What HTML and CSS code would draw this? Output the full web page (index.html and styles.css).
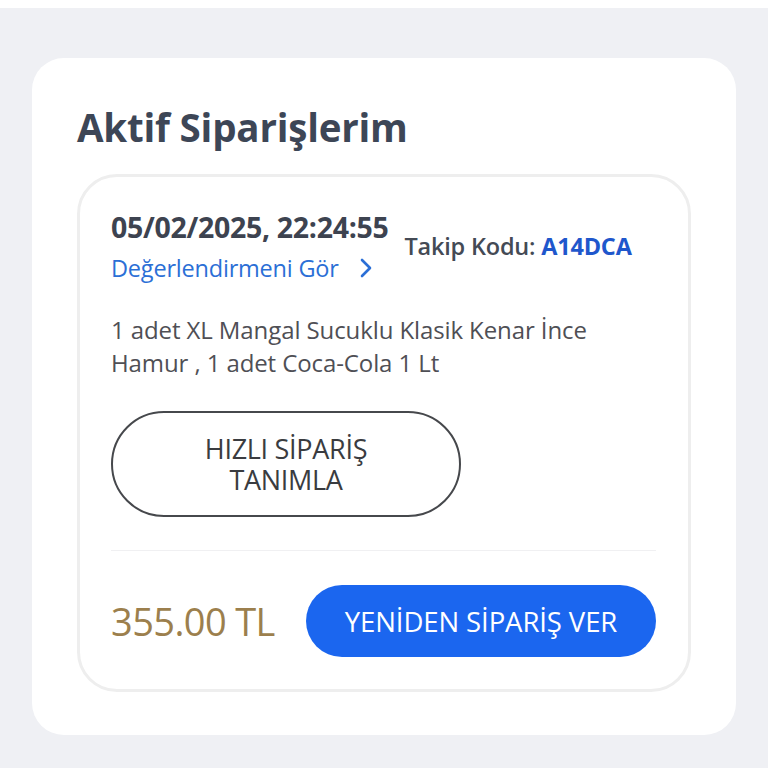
FILE: index.html
```html
<!DOCTYPE html>
<html lang="tr">
<head>
<meta charset="utf-8">
<link rel="stylesheet" href="styles.css">
</head>
<body>
<div class="page">
  <section class="panel">
    <h1 class="title">Aktif Siparişlerim</h1>
    <div class="order">
      <div class="order-head">
        <div class="head-left">
          <div class="date">05/02/2025, 22:24:55</div>
          <a class="review">Değerlendirmeni Gör
            <svg class="chev" width="14" height="22" viewBox="0 0 14 22"><path d="M3 3 L11 11 L3 19" fill="none" stroke="#2b6fd6" stroke-width="2.6" stroke-linecap="round" stroke-linejoin="round"/></svg>
          </a>
        </div>
        <div class="track">Takip Kodu: <span class="code">A14DCA</span></div>
      </div>
      <p class="desc">1 adet XL Mangal Sucuklu Klasik Kenar İnce Hamur , 1 adet Coca-Cola 1 Lt</p>
      <button class="quick"><span class="quick-line">HIZLI SİPARİŞ</span><span class="quick-line">TANIMLA</span></button>
      <div class="divider"></div>
      <div class="order-foot">
        <div class="price">355.00 TL</div>
        <button class="reorder">YENİDEN SİPARİŞ VER</button>
      </div>
    </div>
  </section>
</div>
</body>
</html>
```
FILE: styles.css
```css
html, body { margin: 0; padding: 0; background: #ffffff; }
body { font-family: "Open Sans", "Noto Sans", sans-serif; }
.page {
  margin-top: 8px;
  background: #eff0f4;
  height: 760px;
  padding: 50px 32px 0;
  box-sizing: border-box;
}
.panel {
  background: #ffffff;
  border-radius: 32px;
  padding: 40px 45px 45px;
  height: 677px;
  box-sizing: border-box;
}
.title {
  margin: 0 0 18px;
  font-size: 38.5px;
  font-weight: 700;
  color: #3d4656;
  letter-spacing: -0.2px;
  line-height: 58px;
}
.order {
  border: 3px solid #eeeeee;
  border-radius: 40px;
  padding: 34px 32px 32px 31px;
}
.order-head {
  display: flex;
  align-items: flex-start;
  gap: 16px;
}
.date {
  font-size: 28.5px;
  font-weight: 700;
  color: #3d4350;
  letter-spacing: -0.3px;
  line-height: 32px;
}
.review {
  display: flex;
  align-items: center;
  gap: 20px;
  font-size: 23.5px;
  color: #2b6fd6;
  line-height: 30px;
  margin-top: 10px;
  letter-spacing: -0.2px;
}
.chev { display: block; }
.track {
  margin-top: 20px;
  font-size: 23.5px;
  font-weight: 600;
  color: #444a55;
  line-height: 30px;
  letter-spacing: -0.2px;
}
.code { color: #1f57cc; font-weight: 700; }
.desc {
  margin: 30px 0 0;
  font-size: 24px;
  color: #4f4f55;
  line-height: 33px;
  letter-spacing: -0.1px;
}
.quick {
  display: flex;
  flex-direction: column;
  align-items: center;
  justify-content: center;
  margin-top: 32px;
  width: 350px;
  height: 106px;
  border: 2px solid #46484c;
  border-radius: 53px;
  background: #ffffff;
  font-family: "Open Sans", "Noto Sans", sans-serif;
  font-size: 27px;
  color: #3a3c40;
  padding: 0;
  letter-spacing: -0.3px;
}
.quick-line {
  display: block;
  line-height: 31px;
}
.divider {
  margin-top: 33px;
  height: 1px;
  background: #f0f0f2;
}
.order-foot {
  display: flex;
  align-items: center;
  justify-content: space-between;
  margin-top: 34px;
}
.price {
  font-size: 38px;
  color: #9c7f4d;
  letter-spacing: -0.6px;
}
.reorder {
  width: 350px;
  height: 72px;
  border: none;
  border-radius: 36px;
  background: #1b66ef;
  color: #ffffff;
  font-family: "Open Sans", "Noto Sans", sans-serif;
  font-size: 27.5px;
  padding: 0;
  letter-spacing: -0.1px;
}
```
